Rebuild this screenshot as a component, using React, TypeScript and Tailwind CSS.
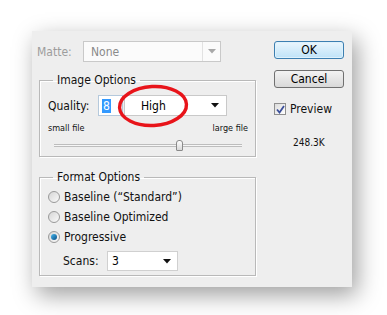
import React from "react";

const font = "font-['DejaVu_Sans_Condensed','DejaVu_Sans',sans-serif]";

function Arrow({ gray }: { gray?: boolean }) {
  return (
    <svg width="8" height="5" viewBox="0 0 8 5">
      <path d="M0 0 H8 L4 4.5 Z" fill={gray ? "#a8a8a8" : "#111"} />
    </svg>
  );
}

function Radio({ checked, label }: { checked?: boolean; label: string }) {
  return (
    <div className="flex h-[20px] items-center">
      <span className="flex h-[12px] w-[12px] items-center justify-center rounded-full border border-[#9a9a9a] bg-gradient-to-br from-[#d6d6d6] to-[#fafafa]">
        {checked && (
          <span className="h-[6px] w-[6px] rounded-full bg-gradient-to-br from-[#45b8ee] to-[#0b4f86]" />
        )}
      </span>
      <span className="ml-[4px] text-[12px] text-[#111]">{label}</span>
    </div>
  );
}

export default function App() {
  return (
    <div className={`relative h-[315px] w-[387px] bg-white pl-[32px] pt-[31px] ${font}`}>
      <div className="flex h-[256px] w-[320px] bg-[#eeeeee] pl-[5px] pt-[10px] shadow-[5px_8px_22px_rgba(0,0,0,0.38)]">
        {/* left column */}
        <div className="flex w-[219px] flex-col">
          <div className="flex h-[21px] items-center">
            <span className="w-[46px] text-[12px] text-[#9d9d9d]">Matte:</span>
            <div className="flex h-[21px] w-[138px] items-center border border-[#c9c9c9] bg-[#fbfbfb]">
              <span className="ml-[7px] flex-1 text-[12px] text-[#8a8a8a]">None</span>
              <span className="flex h-full w-[18px] items-center justify-center border-l border-[#e2e2e2]">
                <Arrow gray />
              </span>
            </div>
          </div>

          {/* Image Options */}
          <fieldset className="ml-[2px] mt-[11px] w-[217px] border border-[#b9b9b9] pb-[5px] shadow-[inset_1px_1px_0_#fff,1px_1px_0_#fff]">
            <legend className="ml-[13px] px-[4px] text-[12px] leading-[14px] text-[#111]">
              Image Options
            </legend>
            <div className="mt-[8px] flex h-[21px] items-center pl-[8px]">
              <span className="w-[50px] text-[12px] text-[#111]">Quality:</span>
              <div className="flex h-[21px] w-[25px] items-center border border-[#b5c9dc] bg-white pl-[3px]">
                <span className="bg-[#3399ff] px-[1px] text-[12px] leading-[14px] text-white">8</span>
              </div>
              <div className="ml-[1px] flex h-[21px] w-[103px] items-center border border-[#c9c9c9] bg-white">
                <span className="ml-[16px] flex-1 text-[12px] text-[#000]">High</span>
                <span className="mr-[7px]">
                  <Arrow />
                </span>
              </div>
            </div>
            <div className="mt-[7px] flex h-[11px] items-center justify-between pl-[8px] pr-[7px] text-[9px] leading-[11px] text-[#111]">
              <span>small file</span>
              <span>large file</span>
            </div>
            <div className="ml-[14px] mt-[5px] flex h-[12px] w-[188px] items-center">
              <span className="h-[3px] w-[122px] border-y border-[#bdbdbd] bg-[#f6f6f6]" />
              <span className="h-[11px] w-[7px] rounded-t-[3px] rounded-b-[1px] border border-[#8a8a8a] bg-gradient-to-b from-white to-[#d8d8d8]" />
              <span className="h-[3px] flex-1 border-y border-[#bdbdbd] bg-[#f6f6f6]" />
            </div>
          </fieldset>

          {/* Format Options */}
          <fieldset className="ml-[2px] mt-[13px] w-[217px] border border-[#b9b9b9] pb-[4px] pl-[8px] shadow-[inset_1px_1px_0_#fff,1px_1px_0_#fff]">
            <legend className="ml-[5px] px-[4px] text-[12px] leading-[14px] text-[#111]">
              Format Options
            </legend>
            <div className="mt-[3px]">
              <Radio label={"Baseline (\u201cStandard\u201d)"} />
              <Radio label="Baseline Optimized" />
              <Radio checked label="Progressive" />
            </div>
            <div className="mt-[4px] flex h-[20px] items-center pl-[15px]">
              <span className="w-[44px] text-[12px] text-[#111]">Scans:</span>
              <div className="flex h-[20px] w-[71px] items-center border border-[#d0d0d0] bg-white">
                <span className="ml-[4px] flex-1 text-[12px] text-[#000]">3</span>
                <span className="mr-[6px]">
                  <Arrow />
                </span>
              </div>
            </div>
          </fieldset>
        </div>

        {/* right column */}
        <div className="ml-[18px] flex w-[70px] flex-col">
          <button className="flex h-[18px] w-[70px] items-center justify-center rounded-[3px] border border-[#3c7fb1] bg-gradient-to-b from-[#eaf6fd] to-[#bfe3f8] text-[12px] leading-none text-[#000] shadow-[inset_0_0_0_1px_#dff2fc]">
            OK
          </button>
          <button className="mt-[11px] flex h-[18px] w-[70px] items-center justify-center rounded-[3px] border border-[#707070] bg-gradient-to-b from-[#f3f3f3] to-[#d9d9d9] text-[12px] leading-none text-[#000]">
            Cancel
          </button>
          <div className="mt-[15px] flex h-[12px] items-center">
            <span className="flex h-[12px] w-[12px] items-center justify-center border border-[#8f8f8f] bg-gradient-to-br from-[#dcdcdc] to-white">
              <svg width="9" height="9" viewBox="0 0 9 9">
                <path d="M1 4.5 L3.5 7.5 L8 1" fill="none" stroke="#3b4f9a" strokeWidth="1.8" />
              </svg>
            </span>
            <span className="ml-[4px] text-[12px] text-[#111]">Preview</span>
          </div>
          <div className="ml-[19px] mt-[22px] text-[10px] leading-[12px] text-[#111]">248.3K</div>
        </div>
      </div>

      {/* hand-drawn red ellipse over the quality select */}
      <svg className="absolute left-[116px] top-[83px]" width="74" height="46" viewBox="0 0 74 46">
        <ellipse cx="37" cy="23" rx="33.5" ry="19.5" fill="none" stroke="#e8141a" strokeWidth="3.4" transform="rotate(-3 37 23)" />
      </svg>
    </div>
  );
}
